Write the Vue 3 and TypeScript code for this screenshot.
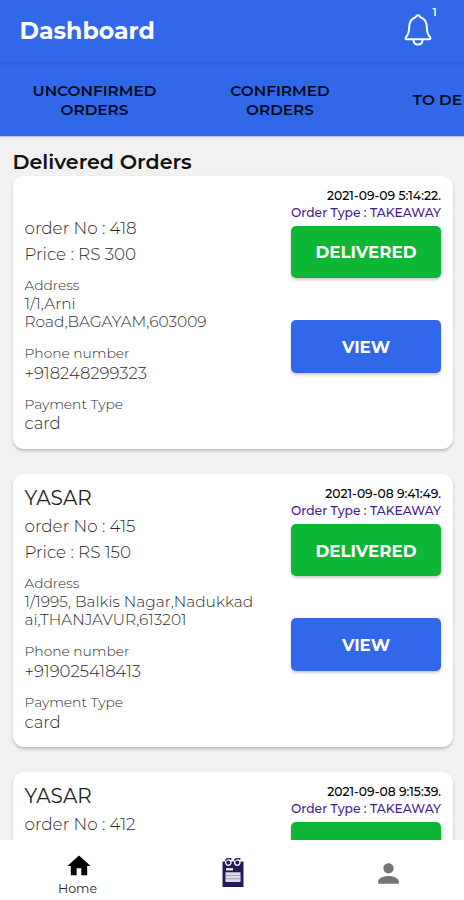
<script setup lang="ts">
interface Order {
  name: string
  no: number
  price?: number
  address?: string[]
  phone?: string
  payment?: string
  placedAt: string
  type: string
}

const tabs: string[][] = [['UNCONFIRMED', 'ORDERS'], ['CONFIRMED', 'ORDERS'], ['TO DE']]

const orders: Order[] = [
  {
    name: '',
    no: 418,
    price: 300,
    address: ['1/1,Arni', 'Road,BAGAYAM,603009'],
    phone: '+918248299323',
    payment: 'card',
    placedAt: '2021-09-09 5:14:22.',
    type: 'TAKEAWAY',
  },
  {
    name: 'YASAR',
    no: 415,
    price: 150,
    address: ['1/1995, Balkis Nagar,Nadukkad', 'ai,THANJAVUR,613201'],
    phone: '+919025418413',
    payment: 'card',
    placedAt: '2021-09-08 9:41:49.',
    type: 'TAKEAWAY',
  },
  {
    name: 'YASAR',
    no: 412,
    placedAt: '2021-09-08 9:15:39.',
    type: 'TAKEAWAY',
  },
]
</script>

<template>
  <div class="screen">
    <header class="header">
      <h1 class="title">Dashboard</h1>
      <div class="bell">
        <svg width="30" height="34" viewBox="0 0 30 34" fill="none" stroke="#fff" stroke-width="2" stroke-linejoin="round" stroke-linecap="round">
          <path d="M12.500 4.300 Q15 .3 17.500 4.300 C22 6 23.800 9.500 23.800 14 C23.800 20 25 22 27.200 24.300 Q28 26.300 26.300 26.300 H3.700 Q2 26.300 2.800 24.300 C5 22 6.200 20 6.200 14 C6.200 9.500 8 6 12.500 4.300 Z" />
          <path d="M10.400 26.600 C10.700 33.200 19.300 33.200 19.600 26.600" />
        </svg>
        <span class="count">1</span>
      </div>
    </header>

    <nav class="tabs">
      <div v-for="(tab, i) in tabs" :key="i" class="tab">
        <span v-for="line in tab" :key="line">{{ line }}</span>
      </div>
    </nav>

    <main class="content">
      <h2 class="heading">Delivered Orders</h2>
      <article v-for="order in orders" :key="order.no" class="card">
        <section class="details">
          <div class="name">{{ order.name }}</div>
          <div class="main-line">order No : {{ order.no }}</div>
          <div v-if="order.price" class="main-line">Price : RS {{ order.price }}</div>
          <div v-if="order.address" class="field">
            <div class="label">Address</div>
            <div v-for="line in order.address" :key="line" class="address">{{ line }}</div>
          </div>
          <div v-if="order.phone" class="field">
            <div class="label">Phone number</div>
            <div class="value">{{ order.phone }}</div>
          </div>
          <div v-if="order.payment" class="field">
            <div class="label">Payment Type</div>
            <div class="value">{{ order.payment }}</div>
          </div>
        </section>
        <section class="actions">
          <div class="date">{{ order.placedAt }}</div>
          <div class="type">Order Type : {{ order.type }}</div>
          <button class="btn delivered"><span v-if="order.price">DELIVERED</span></button>
          <button v-if="order.price" class="btn view">VIEW</button>
        </section>
      </article>
    </main>

    <footer class="bottom">
      <div class="nav-item home">
        <svg width="28" height="28" viewBox="0 0 24 24" fill="#000"><path d="M10 20v-6h4v6h5v-8h3L12 3 2 12h3v8z" /></svg>
        <span class="nav-label">Home</span>
      </div>
      <div class="nav-item">
        <svg width="22" height="30" viewBox="0 0 22 30">
          <path d="M.5 3.500 H21.500 V29 H.500 Z" fill="#211a5c" />
          <circle cx="6.300" cy="4.600" r="2.700" fill="#211a5c" stroke="#fff" stroke-width="1.300" />
          <circle cx="15.300" cy="4.600" r="2.700" fill="#211a5c" stroke="#fff" stroke-width="1.300" />
          <path d="M3.400 2.500 A4 4 0 0 1 9.400 1.500 M12.400 2.500 A4 4 0 0 1 18.400 1.500" fill="none" stroke="#211a5c" stroke-width="1.500" />
          <rect x="4" y="10.200" width="7" height="2.200" fill="#fff" />
          <rect x="3.500" y="14.300" width="15" height="9.700" fill="#dddce3" />
          <path d="M3.500 17.500 H18.500 M3.500 20.800 H18.500" stroke="#9a98ad" stroke-width=".9" />
        </svg>
      </div>
      <div class="nav-item profile">
        <svg width="31" height="31" viewBox="0 0 24 24" fill="#757575"><path d="M12 12c2.210 0 4-1.790 4-4s-1.790-4-4-4-4 1.790-4 4 1.790 4 4 4zm0 2c-2.670 0-8 1.340-8 4v2h16v-2c0-2.660-5.330-4-8-4z" /></svg>
      </div>
    </footer>
  </div>
</template>

<style>
body {
  overflow: hidden;
}
</style>

<style scoped>
.screen {
  display: flex;
  flex-direction: column;
  width: 464px;
  height: 900px;
  overflow: hidden;
  background: #f1f1f1;
  font-family: Montserrat, Inter, sans-serif;
  color: #000;
  white-space: nowrap;
}
.header {
  display: flex;
  flex: none;
  justify-content: space-between;
  box-sizing: border-box;
  height: 62px;
  padding: 0 25.500px 0 19.500px;
  background: #3068e9;
}
.title {
  margin: 0;
  font-size: 23.600px;
  line-height: 62px;
  font-weight: 700;
  color: #fff;
}
.bell {
  display: flex;
  padding-top: 13px;
}
.count {
  width: 6px;
  margin-top: -6px;
  font-size: 11px;
  line-height: 11px;
  font-weight: 600;
  color: #fff;
}
.tabs {
  display: flex;
  flex: none;
  height: 73.500px;
  background: linear-gradient(#2c62df, #3068e9 5px);
  box-shadow: 0 1px 1px #b9c6ea;
}
.tab {
  display: flex;
  flex: none;
  flex-direction: column;
  align-items: center;
  justify-content: center;
  width: 182px;
  padding-top: 2px;
  box-sizing: border-box;
  font-size: 15.350px;
  line-height: 19px;
  font-weight: 600;
  color: #050b1c;
}
.tab:first-child {
  width: 189px;
}
.tab:last-child {
  flex: 1;
  align-items: flex-end;
  width: auto;
  padding-right: 2px;
}
.content {
  flex: 1;
  min-height: 0;
  overflow: hidden;
  padding: 0 11px 0 13px;
}
.heading {
  margin: 0 0 0 -0.500px;
  padding-top: 12.500px;
  height: 27.700px;
  font-size: 20.600px;
  line-height: 27px;
  font-weight: 600;
  color: #111;
}
.card {
  display: flex;
  justify-content: space-between;
  box-sizing: border-box;
  height: 273px;
  margin-bottom: 25.200px;
  padding: 11.300px 12px 0 11.500px;
  border-radius: 11px;
  background: #fff;
  box-shadow: 0 2px 3px rgba(0, 0, 0, 0.22);
}
.details {
  color: #2b2b2b;
  font-weight: 300;
}
.name {
  height: 27.700px;
  font-size: 20px;
  line-height: 27.700px;
  font-weight: 400;
  color: #222;
}
.main-line {
  font-size: 16.800px;
  line-height: 26.400px;
}
.field {
  margin-bottom: 12.200px;
}
.main-line + .field {
  margin-top: 8.500px;
}
.label {
  font-size: 13.800px;
  line-height: 18px;
}
.address {
  font-size: 15.400px;
  line-height: 18.600px;
}
.label + .address,
.label + .value {
  margin-top: 0.600px;
}
.value {
  font-size: 16.500px;
  line-height: 20px;
}
.actions {
  display: flex;
  flex-direction: column;
  width: 150px;
  text-align: right;
  font-size: 12.300px;
  font-weight: 500;
}
.date {
  line-height: 18px;
}
.type {
  line-height: 15px;
  color: #4a1a8c;
}
.btn {
  height: 52.500px;
  padding: 1px 0 0;
  border: 0;
  border-radius: 5px;
  font-family: inherit;
  font-size: 16.700px;
  font-weight: 700;
  color: #fff;
  box-shadow: 0 2px 3px rgba(0, 0, 0, 0.2);
}
.delivered {
  margin-top: 5.700px;
  background: #0db735;
}
.view {
  margin-top: 42px;
  background: #3068e9;
}
.bottom {
  display: grid;
  flex: none;
  grid-template-columns: 157px 152px 159px;
  height: 60px;
  background: #fff;
}
.nav-item {
  display: flex;
  flex-direction: column;
  align-items: center;
  justify-content: center;
  padding-top: 5px;
}
.home {
  justify-content: flex-start;
  padding-top: 12px;
}
.profile {
  padding-top: 7px;
}
.nav-label {
  padding-right: 2px;
  margin-top: 1px;
  font-size: 12.600px;
  line-height: 16px;
  color: #222;
}
</style>
